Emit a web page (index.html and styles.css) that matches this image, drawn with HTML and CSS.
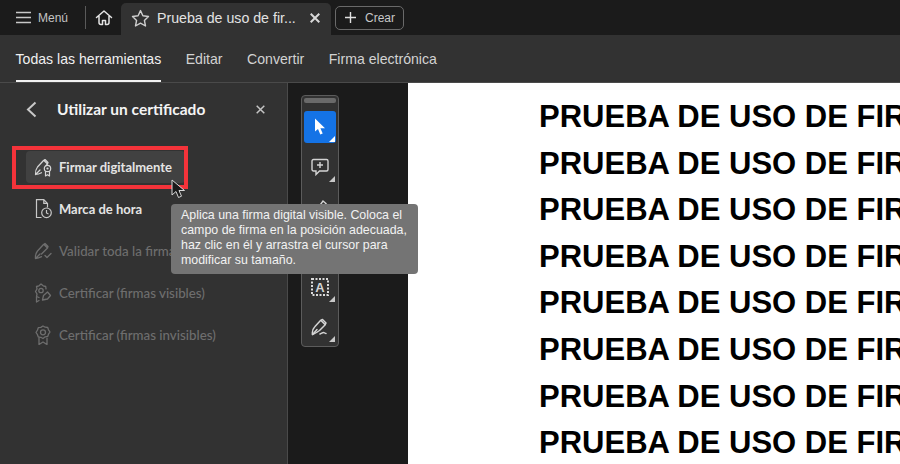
FILE: index.html
```html
<!DOCTYPE html>
<html lang="es">
<head>
<meta charset="utf-8">
<title>Prueba de uso de firma</title>
<link rel="stylesheet" href="styles.css">
</head>
<body>
<div class="app">
  <header class="tabbar">
    <div class="menu">
      <svg class="ic-menu" width="15" height="13" viewBox="0 0 15 13"><path d="M0 1.500h15M0 6.500h15M0 11.500h15" stroke="#c8c8c8" stroke-width="1.500" fill="none"/></svg>
      <span>Menú</span>
    </div>
    <div class="sep"></div>
    <div class="home">
      <svg width="18" height="18" viewBox="0 0 18 18"><path d="M1.500 8.500 9 2l7.500 6.500M4 7v6.500a2 2 0 0 0 2 2h1.500v-4h3v4H12a2 2 0 0 0 2-2V7" stroke="#e4e4e4" stroke-width="1.500" fill="none" stroke-linejoin="round" stroke-linecap="round"/></svg>
    </div>
    <div class="tab">
      <svg class="tab-star" width="19" height="18" viewBox="0 0 19 18"><path d="M9.500 1.600l2.400 5.200 5.600.7-4.100 3.900 1.100 5.600-5-2.800-5 2.800 1.100-5.600L1.500 7.500l5.600-.7z" stroke="#cfcfcf" stroke-width="1.400" fill="none" stroke-linejoin="round"/></svg>
      <span class="tab-title">Prueba de uso de fir...</span>
      <svg class="tab-x" width="10" height="10" viewBox="0 0 10 10"><path d="M.7.700l8.600 8.600M9.300.700.700 9.300" stroke="#d8d8d8" stroke-width="2" fill="none"/></svg>
    </div>
    <div class="create">
      <svg width="11" height="11" viewBox="0 0 11 11"><path d="M5.500 0v11M0 5.500h11" stroke="#e0e0e0" stroke-width="1.400"/></svg>
      <span>Crear</span>
    </div>
  </header>
  <nav class="toolbar">
    <a class="nav on">Todas las herramientas</a>
    <a class="nav">Editar</a>
    <a class="nav">Convertir</a>
    <a class="nav">Firma electrónica</a>
  </nav>
  <main class="body">
    <aside class="panel">
      <div class="panel-head">
        <svg class="back" width="11" height="17" viewBox="0 0 11 17"><path d="M9.500 1.500 2 8.500l7.500 7" stroke="#c8c8c8" stroke-width="2" fill="none"/></svg>
        <h1>Utilizar un certificado</h1>
        <svg class="close" width="9" height="9" viewBox="0 0 9 9"><path d="M.7.700l7.600 7.600M8.300.700.700 8.300" stroke="#c4c4c4" stroke-width="1.500"/></svg>
      </div>
      <ul class="items">
        <li class="item hover">
          <svg width="22" height="20" viewBox="0 0 22 20"><g fill="none" stroke="#d6d6d6" stroke-width="1.200" stroke-linejoin="round" stroke-linecap="round"><path d="M2.500 17.500c-.3-3 .5-5.500 2-7.500l6-6.500 1.500-1 3 3-.5 1.500-1.500 1.500M2.500 17.500l4.500-4.500M2.500 17.500c2-.2 4-.8 6-1.800M11 3.500l3 3"/><circle cx="14.500" cy="11.500" r="3.200"/><path d="M12.500 14.500V19l2-1.300 2 1.300v-4.500"/></g><circle cx="14.500" cy="11.500" r="1.100" fill="#d6d6d6"/></svg>
          <span>Firmar digitalmente</span>
        </li>
        <li class="item">
          <svg width="22" height="20" viewBox="0 0 22 20"><g fill="none" stroke="#c8c8c8" stroke-width="1.200"><path d="M8.500 18.500H3.500V.7h7.300l3.700 3.700v4M10.800.7v3.700h3.700"/><circle cx="13.500" cy="13.800" r="4.800"/><path d="M13.500 11v3l2 1"/></g></svg>
          <span>Marca de hora</span>
        </li>
        <li class="item off">
          <svg width="22" height="20" viewBox="0 0 22 20"><g fill="none" stroke="#6e6e6e" stroke-width="1.300" stroke-linejoin="round" stroke-linecap="round"><path d="M2.500 17.500c-.3-3 .5-5.500 2-7.500l6-6.500 1.500-1 3 3-.5 1.500-6 6M2.500 17.500l4.500-4.500M2.500 17.500c2-.2 4-.8 6-1.800M11 3.500l3 3M12 14.500l2 2 4-4"/></g></svg>
          <span>Validar toda la firma</span>
        </li>
        <li class="item off">
          <svg width="22" height="20" viewBox="0 0 22 20"><g fill="none" stroke="#6e6e6e" stroke-width="1.300" stroke-linejoin="round" stroke-linecap="round"><path d="M6 14.500 3.500 13.500 4 11 2.500 8.500 4 6 3.500 3.500 6 2.800 8 1l2.200 1.800 2.500.7.300 2.300"/><path d="M3.500 14v5l2.500-1.500M9.500 17l1-4.500 4-3.500 3 3.500-3 3.500z"/><circle cx="8" cy="7.500" r="2.200"/></g></svg>
          <span>Certificar (firmas visibles)</span>
        </li>
        <li class="item off">
          <svg width="22" height="20" viewBox="0 0 22 20"><g fill="none" stroke="#6e6e6e" stroke-width="1.300" stroke-linejoin="round"><path d="M10 1l2.200 1.200 2.500.3.800 2.300 1.500 2.200-1.500 2.200-.8 2.300-2.500.3L10 13.500l-2.200-1.200-2.500-.3-.8-2.300L3 7.500l1.500-2.500.8-2.300 2.500-.3z"/><circle cx="10" cy="7.300" r="2.500"/><path d="M6 13v6.500l4-2.500 4 2.500V13"/></g></svg>
          <span>Certificar (firmas invisibles)</span>
        </li>
      </ul>
    </aside>
    <section class="gutter">
      <div class="quick">
        <div class="grip"></div>
        <button class="qt active">
          <svg width="12" height="18" viewBox="0 0 12 18"><path d="M1 .5v13l3-2.500 2.300 5.500 2.400-1L6.400 10.200H11z" fill="#fff"/></svg>
        </button>
        <button class="qt">
          <svg width="18" height="18" viewBox="0 0 18 18"><path d="M2.500 1.500h13a1.500 1.500 0 0 1 1.500 1.500v8.500a1.500 1.500 0 0 1-1.500 1.500H8.500l-3.500 3.500V13H2.500A1.500 1.500 0 0 1 1 11.500V3a1.500 1.500 0 0 1 1.500-1.500zM9 4v6M6 7h6" fill="none" stroke="#d4d4d4" stroke-width="1.400"/></svg>
        </button>
        <button class="qt">
          <svg width="18" height="18" viewBox="0 0 18 18"><path d="M3 15.500 12 3l3 2.500-8.500 11-3.500 1z" fill="none" stroke="#d4d4d4" stroke-width="1.400"/></svg>
        </button>
        <button class="qt"></button>
        <button class="qt">
          <svg width="18" height="18" viewBox="0 0 18 18"><rect x="1" y="1" width="16" height="16" fill="none" stroke="#dcdcdc" stroke-width="2" stroke-dasharray="2 1.500"/><text x="9" y="14" text-anchor="middle" class="qt-a">A</text></svg>
        </button>
        <button class="qt">
          <svg width="19" height="18" viewBox="0 0 19 18"><g fill="none" stroke="#d4d4d4" stroke-width="1.500" stroke-linejoin="round" stroke-linecap="round"><path d="M1.500 16.500c-.5-3 .5-6 2.500-8L9.500 2.500l2-1 3.500 3.500-1 2-5.500 5.500c-2 1.500-4.500 3-7 4z"/><path d="M1.500 16.500l4.500-5M10.500 3l3.500 3.500M9 16c1.500-.5 2.500-1.500 3.500-1.500s1.500 1 2.500 1"/></g></svg>
        </button>
      </div>
    </section>
    <section class="doc">
      <p>PRUEBA DE USO DE FIR</p>
      <p>PRUEBA DE USO DE FIR</p>
      <p>PRUEBA DE USO DE FIR</p>
      <p>PRUEBA DE USO DE FIR</p>
      <p>PRUEBA DE USO DE FIR</p>
      <p>PRUEBA DE USO DE FIR</p>
      <p>PRUEBA DE USO DE FIR</p>
      <p>PRUEBA DE USO DE FIR</p>
    </section>
  </main>
  <div class="highlight"></div>
  <svg class="cursor" width="15" height="21" viewBox="0 0 15 21"><path d="M1 1v15l4-3.500 2.500 6 3-1.300-2.500-5.700h5.500z" fill="#1a1a1a" stroke="#d8d8d8" stroke-width="1"/></svg>
  <div class="tooltip">Aplica una firma digital visible. Coloca el campo de firma en la posición adecuada, haz clic en él y arrastra el cursor para modificar su tamaño.</div>
</div>
</body>
</html>
```
FILE: styles.css
```css
* { box-sizing: border-box; }
html, body { margin: 0; padding: 0; }
body { width: 900px; height: 464px; overflow: hidden; background: #1c1c1c; font-family: "Liberation Sans", Arial, sans-serif; }
.app { position: relative; width: 900px; height: 464px; display: flex; flex-direction: column; overflow: hidden; }

.tabbar { height: 35px; flex: none; display: flex; align-items: center; background: #1b1b1b; }
.menu { display: flex; align-items: center; gap: 7px; padding-left: 16px; width: 85px; font-size: 12px; color: #c4c4c4; }
.sep { width: 1px; height: 23px; background: #5a5a5a; }
.home { width: 35px; display: flex; justify-content: center; padding-top: 1px; }
.tab { align-self: flex-end; height: 32px; width: 210px; background: #323232; border-radius: 5px 5px 0 0; display: flex; align-items: center; padding-left: 10px; padding-bottom: 3px; color: #e2e2e2; font-size: 14.2px; }
.tab svg { flex: none; }
.tab-title { margin-left: 7px; white-space: nowrap; width: 153px; }
.tab-x { margin-left: 0; }
.create { margin-left: 4px; width: 69px; height: 24px; border: 1px solid #6a6a6a; border-radius: 5px; display: flex; align-items: center; padding-left: 9px; gap: 9px; font-size: 12px; color: #c8c8c8; }

.toolbar { height: 48px; flex: none; display: flex; gap: 24.500px; padding-left: 15.500px; background: #323232; border-bottom: 1px solid #4a4a4a; }
.nav { height: 47px; line-height: 48px; font-size: 14.100px; color: #d2d2d2; white-space: nowrap; }
.nav.on { color: #f0f0f0; border-bottom: 2px solid #f2f2f2; }

.body { flex: 1; display: flex; min-height: 0; }
.panel { width: 288px; flex: none; background: #323232; border-right: 1px solid #4a4a4a; padding-left: 25px; }
.panel-head { height: 52px; display: flex; align-items: center; }
.back { flex: none; margin-right: 20px; margin-left: 1px; }
.panel-head h1 { margin: 0; width: 199px; font: 700 15.500px Lato, sans-serif; color: #f4f4f4; white-space: nowrap; }
.close { flex: none; }
.items { list-style: none; margin: 16px 0 0 1px; padding: 0; display: flex; flex-direction: column; gap: 10px; }
.item { width: 159px; height: 32px; display: flex; align-items: center; gap: 4px; padding-left: 7px; border-radius: 4px; font: 700 13px Lato, sans-serif; color: #e4e4e4; white-space: nowrap; }
.item svg { flex: none; }
.item.hover { background: #414141; }
.item.off { color: #6e6e6e; font-weight: 500; font-size: 13.300px; }

.gutter { width: 120px; flex: none; background: #1b1b1b; padding: 12px 0 0 13px; }
.quick { width: 38px; height: 252px; padding: 2px 2px 0; border: 1px solid #5c5c5c; border-radius: 4px; background: #323232; display: flex; flex-direction: column; align-items: center; }
.grip { width: 32px; height: 5px; border-radius: 2px; background: #6a6a6a; margin-bottom: 8px; flex: none; }
.qt { position: relative; width: 32px; height: 32px; flex: none; margin-bottom: 8px; padding: 0; border: 0; border-radius: 3px; background: transparent; display: flex; align-items: center; justify-content: center; }
.qt::after { content: ""; position: absolute; right: 1px; bottom: 1px; border-style: solid; border-width: 0 0 6px 6px; border-color: transparent transparent #c8c8c8 transparent; }
.qt.active { background: #1473e6; }
.qt.active::after { border-bottom-color: #fff; }
.qt-a { font: bold 13px "Liberation Sans", sans-serif; fill: #d4d4d4; }

.doc { flex: 1; background: #fff; padding: 11px 0 0 131px; overflow: hidden; }
.doc p { margin: 0; height: 46.600px; line-height: 46.600px; font-size: 31px; font-weight: bold; color: #000; white-space: nowrap; }

.highlight { position: absolute; left: 12px; top: 146px; width: 176px; height: 43px; border: 4px solid #f4333a; }
.cursor { position: absolute; left: 171px; top: 179px; }
.tooltip { position: absolute; left: 171px; top: 204px; width: 247px; height: 70px; padding: 4px 10px; border-radius: 4px; background: #747474; color: #f2f2f2; font-size: 12.400px; line-height: 15px; }
```
